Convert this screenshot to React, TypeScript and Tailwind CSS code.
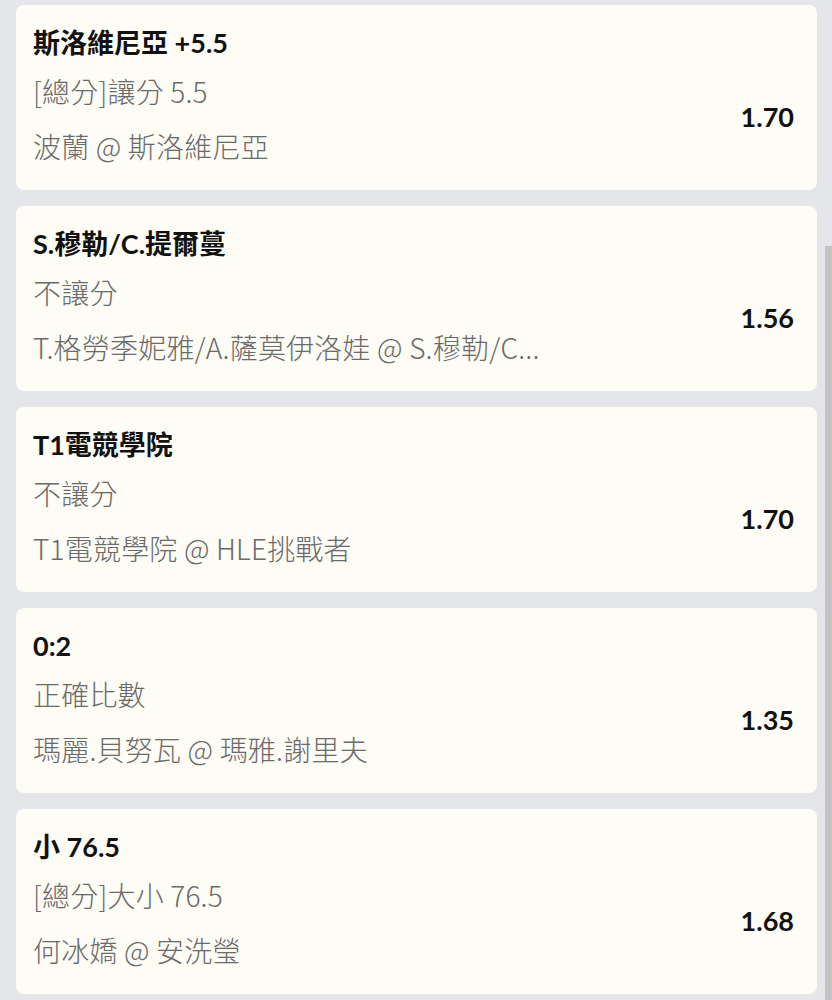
const bets = [
  { title: "斯洛維尼亞 +5.5", market: "[總分]讓分 5.5", match: "波蘭 @ 斯洛維尼亞", odds: "1.70" },
  { title: "S.穆勒/C.提爾蔓", market: "不讓分", match: "T.格勞季妮雅/A.薩莫伊洛娃 @ S.穆勒/C...", odds: "1.56" },
  { title: "T1電競學院", market: "不讓分", match: "T1電競學院 @ HLE挑戰者", odds: "1.70" },
  { title: "0:2", market: "正確比數", match: "瑪麗.貝努瓦 @ 瑪雅.謝里夫", odds: "1.35" },
  { title: "小 76.5", market: "[總分]大小 76.5", match: "何冰嬌 @ 安洗瑩", odds: "1.68" },
];

function BetCard({ title, market, match, odds }: (typeof bets)[number]) {
  return (
    <div className="h-[185px] rounded-lg bg-[#fdfcf5] pl-[17px] pr-[23px] pt-[21px]">
      <div className="text-[27px] font-bold leading-[34px] text-[#111]">{title}</div>
      <div className="mt-[14px] flex items-center justify-between">
        <div
          className="text-[28px] font-light leading-[34px] tracking-[0.2px] text-[#6a6a6a]"
          style={{ fontFamily: "'Noto Sans CJK TC', sans-serif" }}
        >
          <div>{market}</div>
          <div className="mt-[21px] whitespace-nowrap">{match}</div>
        </div>
        <div className="-mt-[2px] text-[27px] font-bold text-[#111]">{odds}</div>
      </div>
    </div>
  );
}

export default function App() {
  return (
    <div
      className="relative h-[1000px] overflow-hidden bg-[#e4e6e9] pl-4 pr-[15px] pt-[5px]"
      style={{ fontFamily: "Lato, 'Noto Sans CJK TC', sans-serif" }}
    >
      <div className="flex flex-col gap-[16px]">
        {bets.map((b) => (
          <BetCard key={b.title} {...b} />
        ))}
      </div>
      <div className="absolute right-0 top-[246px] h-[760px] w-[7px] bg-[#c4c4c4]" />
    </div>
  );
}
